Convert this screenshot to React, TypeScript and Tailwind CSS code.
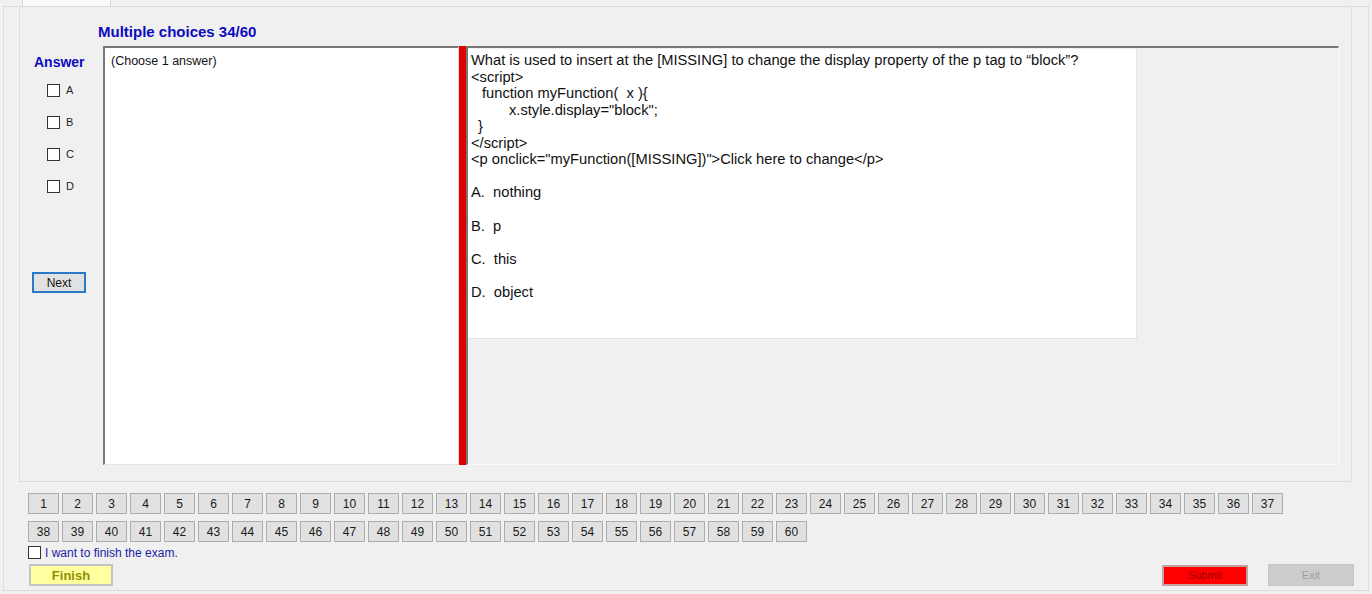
import React from "react";

const nums1 = Array.from({ length: 37 }, (_, i) => i + 1);
const nums2 = Array.from({ length: 23 }, (_, i) => i + 38);

function NavBtn({ n }: { n: number }) {
  return (
    <div className="w-[31px] h-[21px] bg-[#e1e1e1] border border-[#adadad] flex items-center justify-center text-[12px] text-[#1a1a1a] leading-none">
      {n}
    </div>
  );
}

function Check({ label }: { label: string }) {
  return (
    <div className="h-[32px] flex items-start pl-[27px]">
      <div className="w-[13px] h-[13px] border border-[#333] bg-white" />
      <span className="ml-[6px] text-[11px] leading-[13px] text-[#222]">{label}</span>
    </div>
  );
}

export default function App() {
  return (
    <div
      className="w-[1372px] h-[594px] bg-[#f0f0f0] flex flex-col overflow-hidden"
      style={{ fontFamily: '"Liberation Sans", Arial, sans-serif' }}
    >
      {/* tab strip */}
      <div className="h-[6px] flex">
        <div className="ml-[22px] w-[89px] h-[6px] bg-[#fbfbfb] border-l border-r border-[#d9d9d9]" />
      </div>
      {/* tab page */}
      <div className="ml-[3px] w-[1366px] h-[585px] border border-[#dcdcdc] flex flex-col">
        {/* group box */}
        <div className="ml-[15px] w-[1333px] h-[475px] border-l border-r border-b border-[#dcdcdc] flex flex-col pt-[16px]">
          <div className="pl-[78px] text-[15px] leading-[17px] font-bold text-[#0b0bbf]">Multiple choices 34/60</div>
          <div className="mt-[6px] h-[419px] flex">
            {/* left answer column */}
            <div className="w-[83px] flex flex-col">
              <div className="pt-[8px] pl-[14px] text-[14px] leading-[16px] font-bold text-[#0b0bbf]">Answer</div>
              <div className="mt-[14px] flex flex-col">
                <Check label="A" />
                <Check label="B" />
                <Check label="C" />
                <Check label="D" />
              </div>
              <div className="mt-[60px] ml-[12px] w-[54px] h-[21px] border-2 border-[#2b78c6] bg-[#e1e1e1] flex items-center justify-center text-[12px] text-[#111]">
                Next
              </div>
            </div>
            {/* left white panel */}
            <div className="w-[356px] h-full bg-white border-t-2 border-l-2 border-[#777] border-r border-b border-r-[#e6e6e6] border-b-[#e6e6e6] pt-[6px] pl-[6px]">
              <div className="text-[12.5px] leading-[14px] text-[#111]">(Choose 1 answer)</div>
            </div>
            {/* red divider */}
            <div className="w-[7px] h-full bg-[#e00000]" />
            {/* right panel */}
            <div className="w-[873px] h-full bg-[#f0f0f0] border-t-2 border-l-2 border-[#777] border-r border-b border-r-[#fafafa] border-b-[#fafafa] pt-[1px]">
              <div className="w-[669px] h-[290px] bg-white border-r border-b border-[#e4e4e4] pt-[3px] pl-[3px] text-[14.7px] leading-[16.5px] text-[#111]">
                <div>What is used to insert at the [MISSING] to change the display property of the p tag to “block”?</div>
                <div>&lt;script&gt;</div>
                <div className="pl-[11px] whitespace-pre">function myFunction(  x ){"{"}</div>
                <div className="pl-[38px]">x.style.display="block";</div>
                <div className="pl-[7px]">{"}"}</div>
                <div>&lt;/script&gt;</div>
                <div>&lt;p onclick="myFunction([MISSING])"&gt;Click here to change&lt;/p&gt;</div>
                <div className="mt-[16.5px] whitespace-pre">A.  nothing</div>
                <div className="mt-[17px] whitespace-pre">B.  p</div>
                <div className="mt-[16.5px] whitespace-pre">C.  this</div>
                <div className="mt-[16.5px] whitespace-pre">D.  object</div>
              </div>
            </div>
          </div>
        </div>
        {/* bottom navigation */}
        <div className="pl-[24px] pr-[14px] pt-[11px] flex flex-col">
          <div className="flex gap-[3px]">
            {nums1.map((n) => (
              <NavBtn key={n} n={n} />
            ))}
          </div>
          <div className="flex gap-[3px] mt-[7px]">
            {nums2.map((n) => (
              <NavBtn key={n} n={n} />
            ))}
          </div>
          <div className="flex items-center mt-[4px] h-[13px]">
            <div className="w-[13px] h-[13px] border border-[#333] bg-white" />
            <span className="ml-[4px] text-[12px] leading-[13px] text-[#1c1ca6] translate-y-[1px]">I want to finish the exam.</span>
          </div>
          <div className="flex items-center mt-[5px]">
            <div className="ml-[1px] w-[84px] h-[22px] bg-[#ffff9f] border-2 border-[#c4c4c4] flex items-center justify-center text-[13px] font-bold text-[#8f8f00] pt-[2px]">
              Finish
            </div>
            <div className="flex-1" />
            <div className="w-[86px] h-[21px] bg-[#ff0000] border-2 border-[#c8a0a0] flex items-center justify-center text-[11px] text-[#9a0000]">
              Submit
            </div>
            <div className="ml-[20px] w-[86px] h-[22px] bg-[#cccccc] border border-[#c4c4c4] flex items-center justify-center text-[11px] text-[#a0a0a0]">
              Exit
            </div>
          </div>
        </div>
      </div>
    </div>
  );
}
